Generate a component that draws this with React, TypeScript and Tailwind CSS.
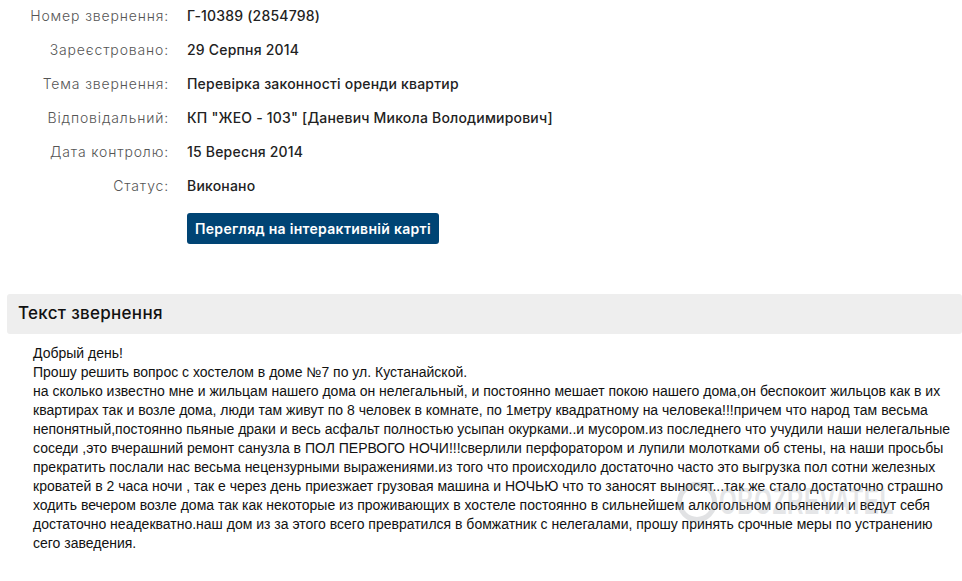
import React from "react";

const rows: [string, string][] = [
  ["Номер звернення:", "Г-10389 (2854798)"],
  ["Зареєстровано:", "29 Серпня 2014"],
  ["Тема звернення:", "Перевірка законності оренди квартир"],
  ["Відповідальний:", "КП \"ЖЕО - 103\" [Даневич Микола Володимирович]"],
  ["Дата контролю:", "15 Вересня 2014"],
  ["Статус:", "Виконано"],
];

const lines = [
  "Добрый день!",
  "Прошу решить вопрос с хостелом в доме №7 по ул. Кустанайской.",
  "на сколько известно мне и жильцам нашего дома он нелегальный, и постоянно мешает покою нашего дома,он беспокоит жильцов как в их квартирах так и возле дома, люди там живут по 8 человек в комнате, по 1метру квадратному на человека!!!причем что народ там весьма непонятный,постоянно пьяные драки и весь асфальт полностью усыпан окурками..и мусором.из последнего что учудили наши нелегальные соседи ,это вчерашний ремонт санузла в ПОЛ ПЕРВОГО НОЧИ!!!сверлили перфоратором и лупили молотками об стены, на наши просьбы прекратить послали нас весьма нецензурными выражениями.из того что происходило достаточно часто это выгрузка пол сотни железных кроватей в 2 часа ночи , так е через день приезжает грузовая машина и НОЧЬЮ что то заносят выносят...так же стало достаточно страшно ходить вечером возле дома так как некоторые из проживающих в хостеле постоянно в сильнейшем алкогольном опьянении и ведут себя достаточно неадекватно.наш дом из за этого всего превратился в бомжатник с нелегалами, прошу принять срочные меры по устранению сего заведения.",
];

export default function App() {
  return (
    <div className="w-[962px] h-[581px] bg-white overflow-hidden relative">
      <div className="flex flex-col font-['Inter',sans-serif] text-[14px] -mt-[2px]">
        {rows.map(([l, v], i) => (
          <div key={i} className="flex items-center h-[34px]">
            <div className="w-[169px] text-right text-[#555555] tracking-[0.85px] font-light">{l}</div>
            <div className="pl-[18px] text-[#222222] font-medium tracking-[0.2px]">{v}</div>
          </div>
        ))}
        <div className="pl-[187px] pt-[11px]">
          <button className="h-[31px] w-[252px] rounded-[3px] bg-[#004474] text-white font-semibold text-[14px] tracking-[0.3px]">
            Перегляд на інтерактивній карті
          </button>
        </div>
      </div>
      <div className="mt-[50px] ml-[7px] h-[40px] rounded-[3px] bg-[#eeeeee] flex items-center pl-[11px] font-['Inter',sans-serif] text-[17px] font-medium tracking-[0.3px] text-[#111111]">
        Текст звернення
      </div>
      <div className="pl-[33px] pr-[8px] pt-[10px] font-['Liberation_Sans',Arial,sans-serif] text-[14px] leading-[19px] text-[#111111]">
        {lines.map((t, i) => (
          <div key={i}>{t}</div>
        ))}
      </div>
      <div className="absolute left-[677px] top-[482px] flex items-center gap-[2px] pointer-events-none opacity-[0.25]" aria-hidden="true">
        <div className="w-[40px] h-[40px] rounded-full border-[5px] border-[#8a9096]" />
        <div className="font-['Liberation_Sans',sans-serif] font-bold text-[36px] leading-none tracking-[1px] text-[#9aa0a6] scale-x-[0.63] origin-left">
          OBOZREVATEL
        </div>
      </div>
    </div>
  );
}
